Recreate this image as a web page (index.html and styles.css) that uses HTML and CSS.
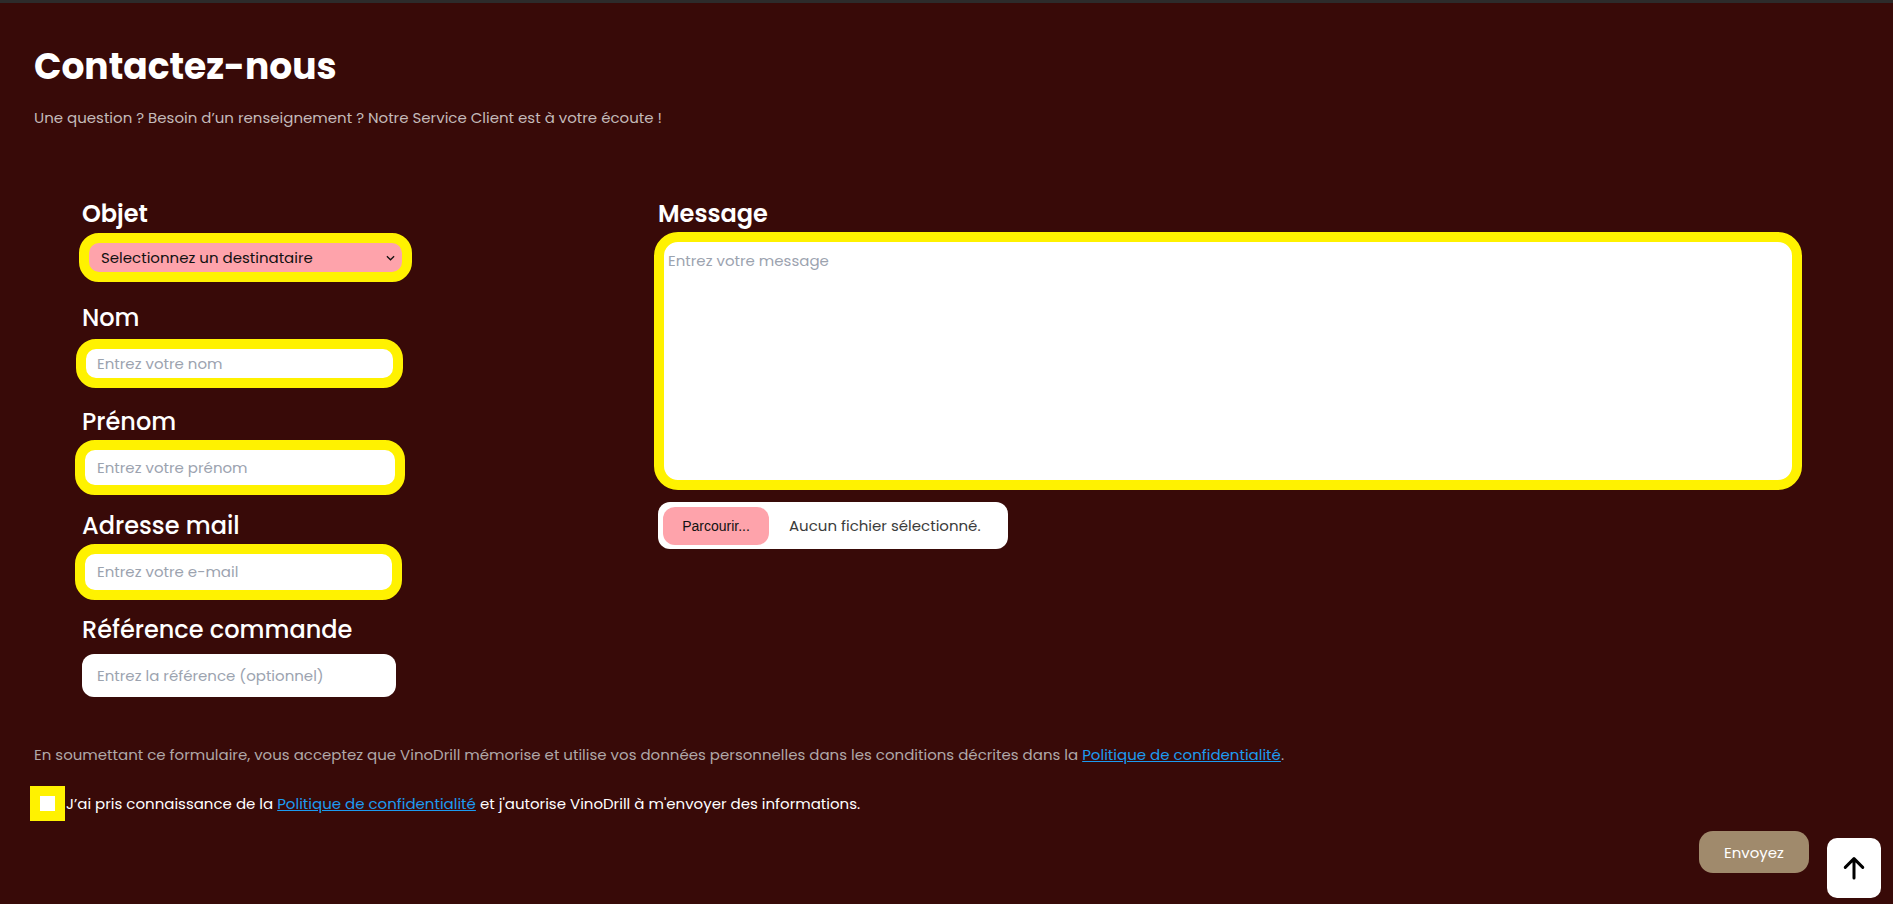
FILE: index.html
```html
<!DOCTYPE html>
<html lang="fr">
<head>
<meta charset="utf-8">
<title>Contactez-nous</title>
<link rel="stylesheet" href="styles.css">
</head>
<body>
<div class="page">
  <header class="header">
    <h1 class="title">Contactez-nous</h1>
    <p class="subtitle">Une question ? Besoin d’un renseignement ? Notre Service Client est à votre écoute !</p>
  </header>

  <form class="form">
    <div class="columns">
      <div class="col-left">
        <div class="group">
          <label class="label label--strong">Objet</label>
          <div class="slot">
            <div class="select-wrap">
              <select class="select"><option>Selectionnez un destinataire</option></select>
              <svg class="chevron" viewBox="0 0 10 6" width="9" height="6"><path d="M1 1l4 4 4-4" fill="none" stroke="#111" stroke-width="1.4"/></svg>
            </div>
          </div>
        </div>
        <div class="group">
          <label class="label">Nom</label>
          <div class="slot">
            <input class="input" type="text" placeholder="Entrez votre nom">
          </div>
        </div>
        <div class="group">
          <label class="label">Prénom</label>
          <div class="slot">
            <input class="input input--wide" type="text" placeholder="Entrez votre prénom">
          </div>
        </div>
        <div class="group">
          <label class="label">Adresse mail</label>
          <div class="slot">
            <input class="input input--tall" type="email" placeholder="Entrez votre e-mail">
          </div>
        </div>
        <div class="group">
          <label class="label">Référence commande</label>
          <div class="slot">
            <input class="input input--plain" type="text" placeholder="Entrez la référence (optionnel)">
          </div>
        </div>
      </div>

      <div class="col-right">
        <label class="label label--strong">Message</label>
        <textarea class="textarea" placeholder="Entrez votre message"></textarea>
        <div class="file">
          <span class="file-btn">Parcourir...</span>
          <span class="file-name">Aucun fichier sélectionné.</span>
        </div>
      </div>
    </div>

    <p class="consent">En soumettant ce formulaire, vous acceptez que VinoDrill mémorise et utilise vos données personnelles dans les conditions décrites dans la <a class="link" href="#">Politique de confidentialité</a>.</p>

    <div class="check-row">
      <span class="check"><span class="check-box"></span></span>
      <span class="check-text">J’ai pris connaissance de la <a class="link" href="#">Politique de confidentialité</a> et j'autorise VinoDrill à m'envoyer des informations.</span>
    </div>

    <div class="actions">
      <button class="submit" type="button">Envoyez</button>
    </div>
  </form>
</div>

<button class="to-top" type="button" aria-label="Haut de page">
  <svg viewBox="0 0 24 24" width="30" height="30"><path d="M12 20V5M5 11.5l7-7 7 7" fill="none" stroke="#000" stroke-width="2.4" stroke-linecap="round" stroke-linejoin="round"/></svg>
</button>
</body>
</html>
```
FILE: styles.css
```css
html, body {
  margin: 0;
  padding: 0;
  background: #380a08;
}

body {
  font-family: "Poppins", "Inter", "Liberation Sans", sans-serif;
  color: #fff;
}

.page {
  box-sizing: border-box;
  min-height: 100vh;
  border-top: 3px solid #2d2b2b;
  padding: 0 34px;
}

.header {
  padding-top: 40px;
}

.title {
  margin: 0;
  font-size: 36px;
  line-height: 48px;
  font-weight: 700;
  color: #fff;
}

.subtitle {
  margin: 15px 0 0;
  font-size: 15px;
  line-height: 24px;
  color: #c4baba;
}

.form {
  margin-top: 66px;
}

.columns {
  display: flex;
  align-items: flex-start;
  gap: 262px;
  padding-left: 48px;
}

.col-left {
  width: 314px;
  flex-shrink: 0;
  display: flex;
  flex-direction: column;
  gap: 19px;
}

.group {
  display: flex;
  flex-direction: column;
}

.label {
  display: block;
  font-size: 24px;
  line-height: 36px;
  font-weight: 500;
  color: #fff;
  margin-bottom: 6px;
}

.label--strong {
  font-weight: 600;
}

.slot {
  height: 43px;
  display: flex;
  align-items: center;
}

.select-wrap {
  position: relative;
  flex-shrink: 0;
  box-sizing: border-box;
  width: 333px;
  height: 49px;
  margin-left: -3px;
  margin-bottom: 4px;
  border: 10px solid #fff200;
  border-radius: 20px;
  background: #fea3ab;
}

.select {
  appearance: none;
  -webkit-appearance: none;
  width: 100%;
  height: 100%;
  border: 0;
  margin: 0;
  background: transparent;
  font-family: inherit;
  font-size: 15px;
  color: #111;
  padding: 0 0 0 12px;
  outline: none;
}

.chevron {
  position: absolute;
  right: 7px;
  top: 12px;
  pointer-events: none;
}

.input {
  flex-shrink: 0;
  box-sizing: border-box;
  width: 327px;
  height: 49px;
  margin: 0 0 0 -6px;
  border: 10px solid #fff200;
  border-radius: 20px;
  background: #fff;
  padding: 0 0 0 11px;
  font-family: inherit;
  font-size: 15px;
  color: #111;
  outline: none;
}

.input--wide {
  width: 330px;
  height: 55px;
  margin-left: -7px;
  padding-left: 12px;
}

.input--tall {
  height: 56px;
  margin-left: -7px;
  padding-left: 12px;
}

.input--plain {
  width: 314px;
  height: 43px;
  margin-left: 0;
  border: 0;
  border-radius: 12px;
  padding-left: 15px;
}

.input::placeholder,
.textarea::placeholder {
  color: #9ca3af;
}

.col-right {
  width: 1140px;
  flex-shrink: 0;
  display: flex;
  flex-direction: column;
}

.col-right .label {
  margin-bottom: 0;
}

.textarea {
  box-sizing: border-box;
  width: 1148px;
  height: 258px;
  margin: 0 0 0 -4px;
  border: 10px solid #fff200;
  border-radius: 24px;
  background: #fff;
  padding: 8px 4px;
  font-family: inherit;
  font-size: 15px;
  line-height: 22px;
  resize: none;
  outline: none;
}

.file {
  box-sizing: border-box;
  margin-top: 12px;
  width: 350px;
  height: 47px;
  padding: 5px;
  background: #fff;
  border-radius: 12px;
  display: flex;
  align-items: center;
}

.file-btn {
  box-sizing: border-box;
  width: 106px;
  height: 38px;
  border-radius: 12px;
  background: #fea3ab;
  color: #111;
  font-family: "Liberation Sans", "Noto Sans", sans-serif;
  font-size: 14px;
  display: flex;
  align-items: center;
  justify-content: center;
}

.file-name {
  margin-left: 20px;
  font-size: 15px;
  color: #3b3b3b;
}

.consent {
  margin: 46px 0 0;
  font-size: 15px;
  line-height: 24px;
  color: #b0a8a8;
}

.link {
  color: #1d9bf0;
  text-decoration: underline;
}

.check-row {
  margin-top: 19px;
  display: flex;
  align-items: center;
  margin-left: -4px;
}

.check {
  box-sizing: border-box;
  width: 35px;
  height: 35px;
  background: #fff200;
  display: flex;
  align-items: center;
  justify-content: center;
  flex-shrink: 0;
}

.check-box {
  width: 15px;
  height: 15px;
  background: #fff;
}

.check-text {
  margin-left: 1px;
  font-size: 15px;
  line-height: 24px;
  color: #fff;
}

.actions {
  margin-top: 10px;
  display: flex;
  justify-content: flex-end;
  padding-right: 50px;
}

.submit {
  width: 110px;
  height: 42px;
  border: 0;
  border-radius: 14px;
  background: #a08a6c;
  color: #fff;
  font-family: inherit;
  font-size: 15px;
  cursor: pointer;
}

.to-top {
  position: fixed;
  right: 12px;
  bottom: 6px;
  width: 54px;
  height: 60px;
  border: 0;
  border-radius: 10px;
  background: #fff;
  display: flex;
  align-items: center;
  justify-content: center;
  padding: 0;
  cursor: pointer;
}
```
